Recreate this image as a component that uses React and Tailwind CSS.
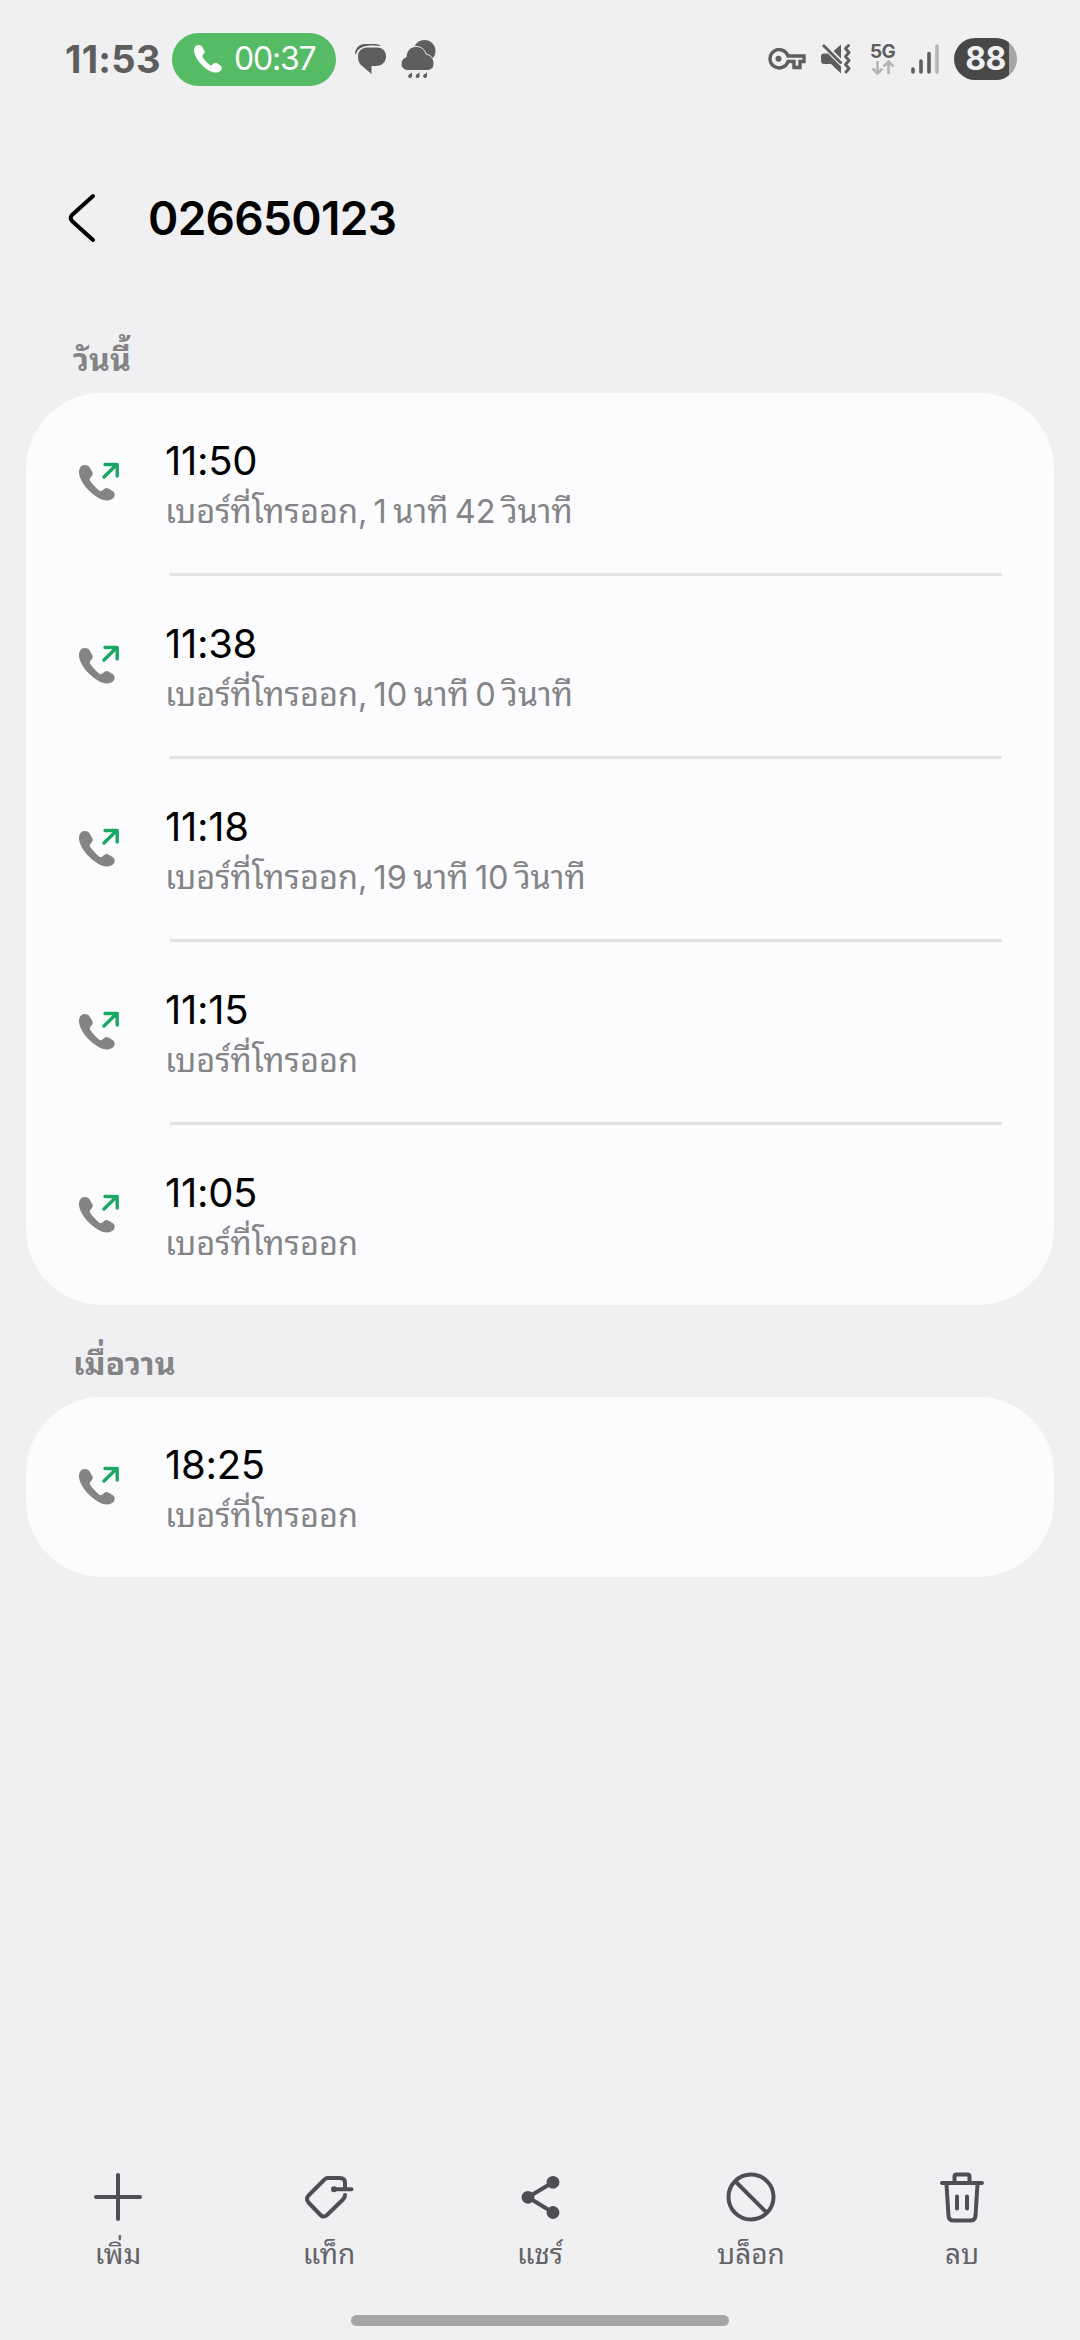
const sections = [
  {
    title: "วันนี้",
    calls: [
      { time: "11:50", detail: "เบอร์ที่โทรออก, 1 นาที 42 วินาที" },
      { time: "11:38", detail: "เบอร์ที่โทรออก, 10 นาที 0 วินาที" },
      { time: "11:18", detail: "เบอร์ที่โทรออก, 19 นาที 10 วินาที" },
      { time: "11:15", detail: "เบอร์ที่โทรออก" },
      { time: "11:05", detail: "เบอร์ที่โทรออก" }
    ]
  },
  { title: "เมื่อวาน", calls: [{ time: "18:25", detail: "เบอร์ที่โทรออก" }] }
];

const handset =
  "M5.5 0C2 0.2 0 3 0 7.5C0 12 4 20 10.5 26C16 31.5 23 35.8 28.5 35.5C33 35.2 35.7 32.5 35.7 29.5C35.7 28 35 27 33.5 26L29.5 23.5C28 22.6 26.5 22.7 25.3 23.9L23 25.8C22 26.5 21 26.3 20 25.5C16.5 22.5 13.5 19.3 11.3 16C10.5 14.9 10.5 14 11.3 13L13 10.8C14 9.5 14 8.6 13.2 7L10.5 2.3C9.5 0.7 7.8 0 5.5 0Z";

function OutgoingCallIcon() {
  return (
    <svg width="44" height="40" viewBox="-1 -3 44 40">
      <path d={handset} fill="#848487" />
      <path d="M25 12L37.5 -0.3M26 -0.5H38.2V11" fill="none" stroke="#1aa764" strokeWidth="3.4" strokeLinecap="round" strokeLinejoin="round" />
    </svg>
  );
}

function StatusBar() {
  return (
    <div className="flex h-[118px] items-center pr-[63px] pl-[65px] text-[#5e5e5e]">
      <div className="w-[95px] text-[38px] font-bold tracking-[0.3px] whitespace-nowrap">11:53</div>
      <div className="ml-3 flex h-[53px] w-[164px] items-center rounded-full bg-[#55bb64] pl-[22px] text-white">
        <svg width="28" height="28" viewBox="0 0 36 36"><path d={handset} fill="currentColor" /></svg>
        <span className="ml-3 text-[32px] tracking-[-1.2px]">00:37</span>
      </div>
      <svg className="ml-[19px]" width="32" height="32" viewBox="0 0 32 32" fill="currentColor">
        <path d="M0 12C0 5 4 1 10 1H20C23 1 25 2 26 3C17 2 4 2 1.5 10Z" />
        <path d="M12 4.5H22C28 4.5 31 8.5 31 13.5C31 19 27 23 21 23H16.5V31L6 22C4 20.5 3 17 3 13.5C3 8 7 4.5 12 4.5Z" />
      </svg>
      <svg className="ml-[14px]" width="35" height="38" viewBox="0 0 35 38" fill="currentColor">
        <circle cx="23.5" cy="11" r="11" />
        <path d="M7 30.5C3 30.5 0 27.5 0 24C0 20.5 2 18 5 17C5.5 11 9 6.5 15 6.5C20 6.5 23.5 9 25 14C29.5 15 33 18.5 33 23.5C33 28 30 30.5 26 30.5Z" stroke="#f0f0f3" />
        <path d="M11 32.5V36a1.9 1.9 0 1 1-3-1.5zM18.5 32.5V36a1.9 1.9 0 1 1-3-1.5zM26 32.5V36a1.9 1.9 0 1 1-3-1.5z" />
      </svg>
      <div className="flex-1" />
      <svg width="38" height="22" viewBox="0 0 38 22">
        <path d="M20 8H36V13.5H32V19.5H26V13.5H20A9.200 9.200 0 1 1 20 8Z" fill="none" stroke="currentColor" strokeWidth="3.4" />
        <circle cx="10.5" cy="10.8" r="3" fill="currentColor" />
      </svg>
      <svg className="ml-[15px]" width="30" height="30" viewBox="0 0 30 30">
        <path d="M0 12Q0 9.5 3 9.5H7L20 22.5V29.5L10 20H3Q0 20 0 17ZM12.5 7L20 0.5V14.5Z" fill="currentColor" />
        <path d="M2 1L20.5 19.5" stroke="currentColor" strokeWidth="2.8" />
        <path d="M27.500 1.500L24.500 4.500L28 8.500L24.500 12.500L28 16.500L24.500 20.500L28 24.500L25 28" fill="none" stroke="currentColor" strokeWidth="2.8" strokeLinecap="round" strokeLinejoin="round" />
      </svg>
      <div className="ml-[19px] flex w-[25px] flex-col items-center">
        <span className="text-[19px] leading-[17px] font-bold tracking-[-0.6px]">5G</span>
        <svg width="24" height="15" viewBox="0 0 24 15" fill="none" stroke="#b5b5b7" strokeWidth="2.6">
          <path d="M6.5 1V13M1.5 8.5L6.5 13.5L11.5 8.5M17.5 14V2M12.5 6.5L17.5 1.5L22.5 6.5" />
        </svg>
      </div>
      <svg className="ml-4" width="28" height="30" viewBox="0 0 28 30" strokeWidth="3.6" strokeLinecap="round" stroke="currentColor">
        <path d="M2 25V28M10 17V28M18 9.5V28" />
        <path d="M26 2V28" stroke="#b5b5b7" />
      </svg>
      <div className="ml-[15px] flex h-[42px] w-[63px] items-center justify-center rounded-full bg-linear-to-r from-[#484848] from-87% to-[#a5a5a7] to-87% text-[32px] font-bold tracking-[-0.5px] text-[#f0f0f3]">88</div>
    </div>
  );
}

function CallRow({ call, last }) {
  return (
    <div className={last ? "" : "h-[183px]"}>
      <div className="flex h-[180px] pl-[52px]">
        <div className="mt-[69px] w-[87px]"><OutgoingCallIcon /></div>
        <div className="pt-[43px]">
          <div className="text-[40px] leading-[50px] tracking-[-0.3px] text-black">{call.time}</div>
          <div className="pt-px text-[32.5px] leading-[50px] whitespace-nowrap text-[#848487] [word-spacing:-2.8px]">{call.detail}</div>
        </div>
      </div>
      {!last && <div className="mr-[52px] ml-36 h-[3px] bg-[#e3e3e5]" />}
    </div>
  );
}

function Section({ section }) {
  return (
    <section>
      <h2 className="flex h-[92px] items-center pt-[25px] pl-[73px] text-[32px] font-bold text-[#848487]">{section.title}</h2>
      <div className="mx-[26px] rounded-[76px] bg-[#fcfcff]">
        {section.calls.map((call, i) => (
          <CallRow key={call.time} call={call} last={i === section.calls.length - 1} />
        ))}
      </div>
    </section>
  );
}

const iconProps = { width: 56, height: 56, viewBox: "0 0 56 56", fill: "none", stroke: "#4f4f53", strokeWidth: 4, strokeLinecap: "round", strokeLinejoin: "round" };

const actions = [
  { label: "เพิ่ม", icon: <svg {...iconProps}><path d="M28 6V50M6 28H50" /></svg> },
  {
    label: "แท็ก",
    icon: (
      <svg {...iconProps}>
        <path d="M44 20V14Q44 9 39 9H26.5Q25 9 23.5 10.5L7.5 26.5Q4.5 30 7.5 33.5L19.5 46Q22.5 49 26 46L42 30.5Q44 28.5 44 26M33 20.3H50.5" />
        <circle cx="33" cy="20.3" r="3" fill="#4f4f53" stroke="none" />
      </svg>
    )
  },
  {
    label: "แชร์",
    icon: (
      <svg {...iconProps}>
        <path d="M41 13.3L16 28.3L41 43.5" />
        <g fill="#4f4f53" stroke="none">
          <circle cx="16" cy="28.3" r="6.4" />
          <circle cx="41" cy="13.3" r="6.4" />
          <circle cx="41" cy="43.5" r="6.4" />
        </g>
      </svg>
    )
  },
  { label: "บล็อก", icon: <svg {...iconProps}><circle cx="28" cy="28" r="22.5" /><path d="M12.5 12.5L43.5 43.5" /></svg> },
  {
    label: "ลบ",
    icon: (
      <svg {...iconProps}>
        <path d="M8 14H48M20.5 14V7.5Q20.5 5.5 22.5 5.5H33.5Q35.5 5.5 35.5 7.5V14M12.5 15L14.5 47Q15 51.5 19.5 51.5H36.5Q41 51.5 41.5 47L43.5 15M23 27.5V39.5M33 27.5V39.5" />
      </svg>
    )
  }
];

export default function App() {
  return (
    <div className="flex h-[2340px] w-[1080px] flex-col bg-[#f0f0f3] font-['Inter','Noto_Sans_Thai_Looped','Loma','Waree','Garuda','Noto_Sans_Thai',sans-serif]">
      <StatusBar />
      <header className="flex h-[183px] items-center pt-[17px] pl-[68px]">
        <svg width="28" height="50" viewBox="0 0 28 50" fill="none" stroke="#000" strokeWidth="4" strokeLinecap="round" strokeLinejoin="round">
          <path d="M25 3L4 22Q1.500 25 4 28L25 47" />
        </svg>
        <h1 className="ml-[52px] text-[46px] font-semibold tracking-[-0.7px]">026650123</h1>
      </header>
      {sections.map((section) => <Section key={section.title} section={section} />)}
      <div className="flex-1" />
      <nav className="flex h-[146px] justify-between px-[62px]">
        {actions.map(({ label, icon }) => (
          <div key={label} className="flex w-28 flex-col items-center gap-1">
            {icon}
            <span className="text-[28px] leading-[50px] text-[#636366]">{label}</span>
          </div>
        ))}
      </nav>
      <div className="mx-auto mb-[14px] h-[11px] w-[378px] rounded-full bg-[#a5a5a7]" />
    </div>
  );
}
